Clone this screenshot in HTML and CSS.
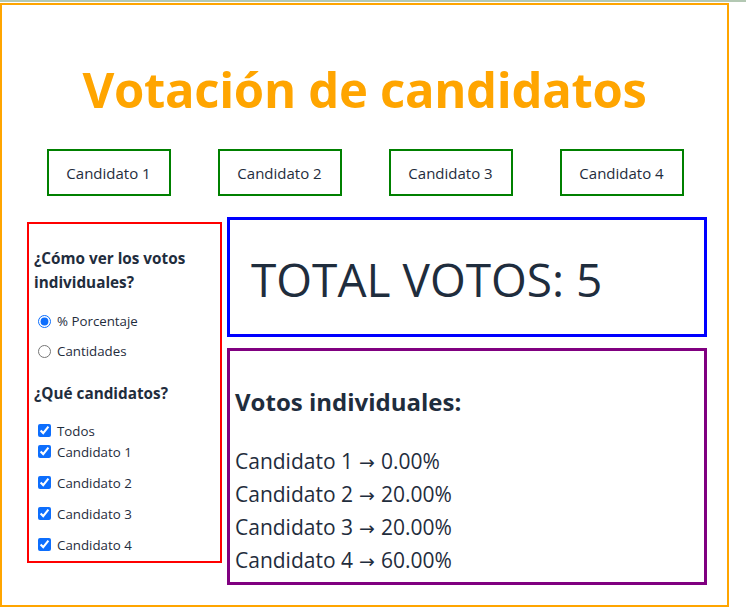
FILE: index.html
```html
<!DOCTYPE html>
<html lang="es">
<head>
<meta charset="utf-8">
<title>Votación de candidatos</title>
<link rel="stylesheet" href="styles.css">
</head>
<body>
<div class="topbar"></div>
<div class="app">
  <h1 class="title">Votación de candidatos</h1>
  <div class="candidates">
    <div class="cand-cell"><button class="cand-btn">Candidato 1</button></div>
    <div class="cand-cell"><button class="cand-btn">Candidato 2</button></div>
    <div class="cand-cell"><button class="cand-btn">Candidato 3</button></div>
    <div class="cand-cell"><button class="cand-btn">Candidato 4</button></div>
  </div>
  <div class="main">
    <aside class="options">
      <h6 class="opt-title">¿Cómo ver los votos individuales?</h6>
      <label class="radio-row"><input type="radio" name="mode" checked><span>% Porcentaje</span></label>
      <label class="radio-row"><input type="radio" name="mode"><span>Cantidades</span></label>
      <h6 class="opt-title opt-title-2">¿Qué candidatos?</h6>
      <label class="check-row"><input type="checkbox" checked><span>Todos</span></label>
      <label class="check-row"><input type="checkbox" checked><span>Candidato 1</span></label>
      <label class="check-row spaced"><input type="checkbox" checked><span>Candidato 2</span></label>
      <label class="check-row spaced"><input type="checkbox" checked><span>Candidato 3</span></label>
      <label class="check-row spaced"><input type="checkbox" checked><span>Candidato 4</span></label>
    </aside>
    <section class="results">
      <div class="total">TOTAL VOTOS: 5</div>
      <div class="individual">
        <h3 class="ind-title">Votos individuales:</h3>
        <p class="ind-line">Candidato 1<span class="arrow"> → </span>0.00%</p>
        <p class="ind-line">Candidato 2<span class="arrow"> → </span>20.00%</p>
        <p class="ind-line">Candidato 3<span class="arrow"> → </span>20.00%</p>
        <p class="ind-line">Candidato 4<span class="arrow"> → </span>60.00%</p>
      </div>
    </section>
  </div>
</div>
</body>
</html>
```
FILE: styles.css
```css
* { box-sizing: border-box; }
html, body { margin: 0; padding: 0; background: #fff; }
body {
  font-family: "Open Sans", "Noto Sans", sans-serif;
  color: #1f2d3d;
  overflow: hidden;
}
.topbar {
  height: 2px;
  background: #b3c8b3;
  margin-bottom: 1px;
}
.app {
  width: 729px;
  height: 604px;
  border: 2px solid #ffa500;
}
.title {
  margin: 0;
  padding-top: 55px;
  font-size: 49px;
  line-height: 58px;
  font-weight: 700;
  color: #ffa500;
  text-align: center;
  letter-spacing: -0.3px;
}
.candidates {
  display: grid;
  grid-template-columns: repeat(4, 171px);
  padding-left: 21px;
  margin-top: 31px;
}
.cand-cell { display: flex; justify-content: center; }
.cand-btn {
  width: 124px;
  height: 47px;
  border: 2px solid #008000;
  background: #fff;
  font-family: inherit;
  font-size: 15px;
  color: #1f2d3d;
  padding: 0;
}
.main {
  display: grid;
  grid-template-columns: 195px 480px;
  column-gap: 5px;
  padding-left: 25px;
  margin-top: 21px;
  align-items: start;
}
.options {
  margin-top: 5px;
  height: 341px;
  border: 2px solid #ff0000;
  padding: 22px 4px 0 5px;
}
.opt-title {
  margin: 0;
  font-size: 15.3px;
  line-height: 24px;
  font-weight: 700;
}
.opt-title-2 { margin-top: 15px; }
.radio-row, .check-row {
  display: flex;
  align-items: center;
  font-size: 13.3px;
  gap: 6px;
}
.radio-row { height: 30px; padding-left: 4px; }
.radio-row:first-of-type { margin-top: 12px; }
.check-row { height: 21px; padding-left: 4px; }
.opt-title-2 + .check-row { margin-top: 15px; }
.check-row.spaced { margin-top: 10px; }
.radio-row input, .check-row input {
  margin: 0;
  width: 13px;
  height: 13px;
  accent-color: #0d6efd;
}
.results {
  display: flex;
  flex-direction: column;
  gap: 11px;
}
.total {
  height: 120px;
  border: 3px solid #0000ff;
  padding: 30px 0 0 21px;
  font-size: 46px;
  line-height: 58px;
  font-weight: 400;
}
.individual {
  height: 237px;
  border: 3px solid #800080;
  padding: 35px 5px 0 5px;
}
.ind-title {
  margin: 0 0 27px;
  font-size: 24px;
  line-height: 32px;
  font-weight: 700;
}
.ind-line {
  margin: 0;
  font-size: 21px;
  line-height: 33px;
  height: 33px;
}
.arrow {
  font-family: "DejaVu Sans", sans-serif;
  font-size: 0.9em;
  line-height: 1;
}
```
